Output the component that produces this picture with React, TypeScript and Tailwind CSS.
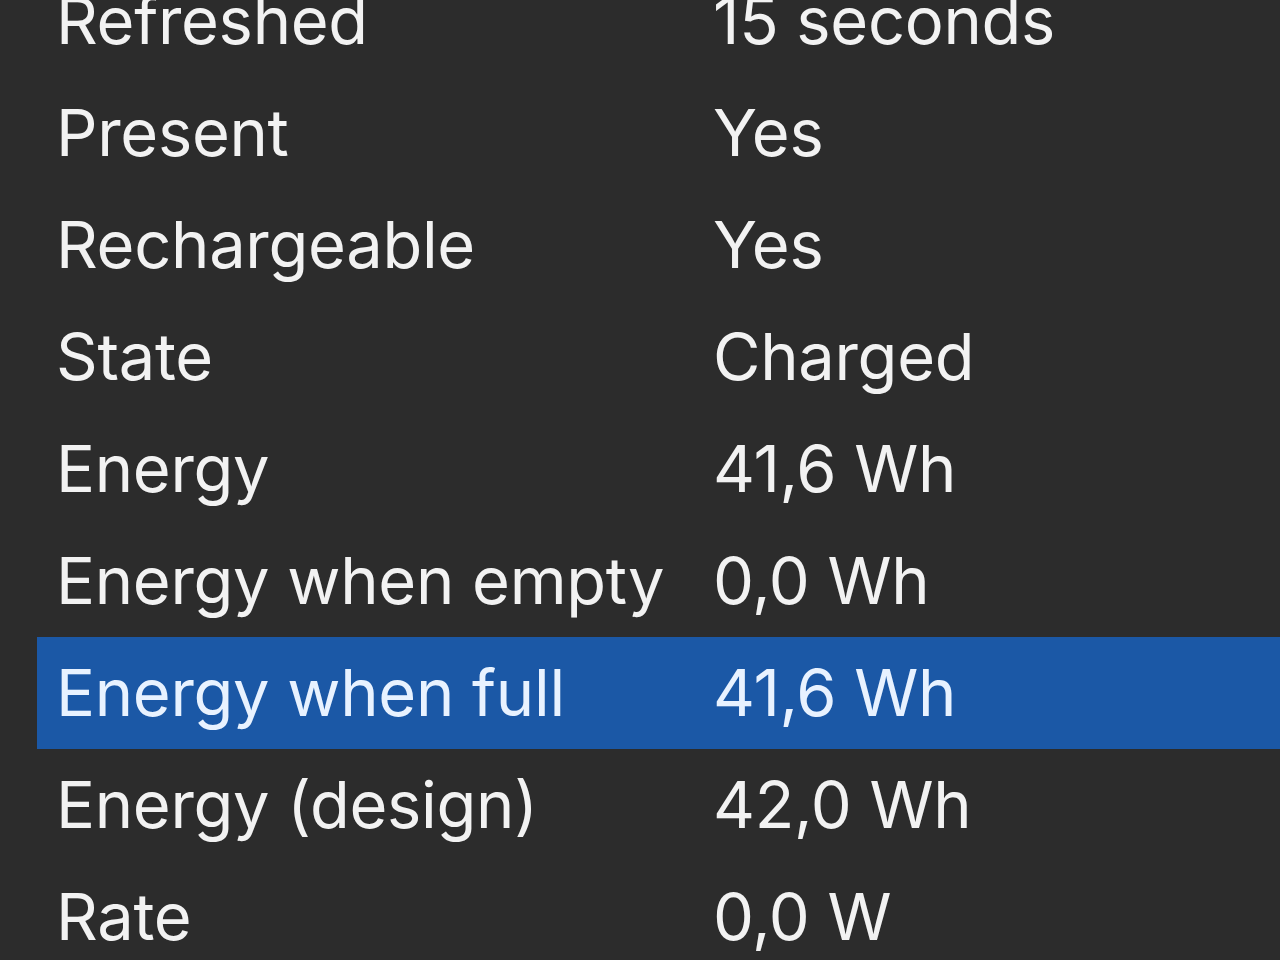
// Battery details list, zoomed crop of a GTK dark-theme property view.

const ROWS: [string, string][] = [
  ["Refreshed", "15 seconds"],
  ["Present", "Yes"],
  ["Rechargeable", "Yes"],
  ["State", "Charged"],
  ["Energy", "41,6 Wh"],
  ["Energy when empty", "0,0 Wh"],
  ["Energy when full", "41,6 Wh"],
  ["Energy (design)", "42,0 Wh"],
  ["Rate", "0,0 W"],
];

const SELECTED = 6;

export default function App() {
  return (
    <div
      className="h-[960px] w-[1280px] overflow-hidden bg-[#2c2c2c] text-[#f2f2f2]"
      style={{ fontFamily: "Inter, 'Noto Sans', sans-serif" }}
    >
      <div className="-mt-[35px] pl-[37px]">
        {ROWS.map(([label, value], i) => (
          <div
            key={label}
            className={`flex h-[112px] items-center pl-[19px] text-[65px] leading-[112px] tracking-[-0.3px] ${
              i === SELECTED ? "bg-[#1b58a6] text-[#e8f2ff]" : ""
            }`}
          >
            <span className="w-[657px] shrink-0 whitespace-nowrap">{label}</span>
            <span className="whitespace-nowrap">{value}</span>
          </div>
        ))}
      </div>
    </div>
  );
}
